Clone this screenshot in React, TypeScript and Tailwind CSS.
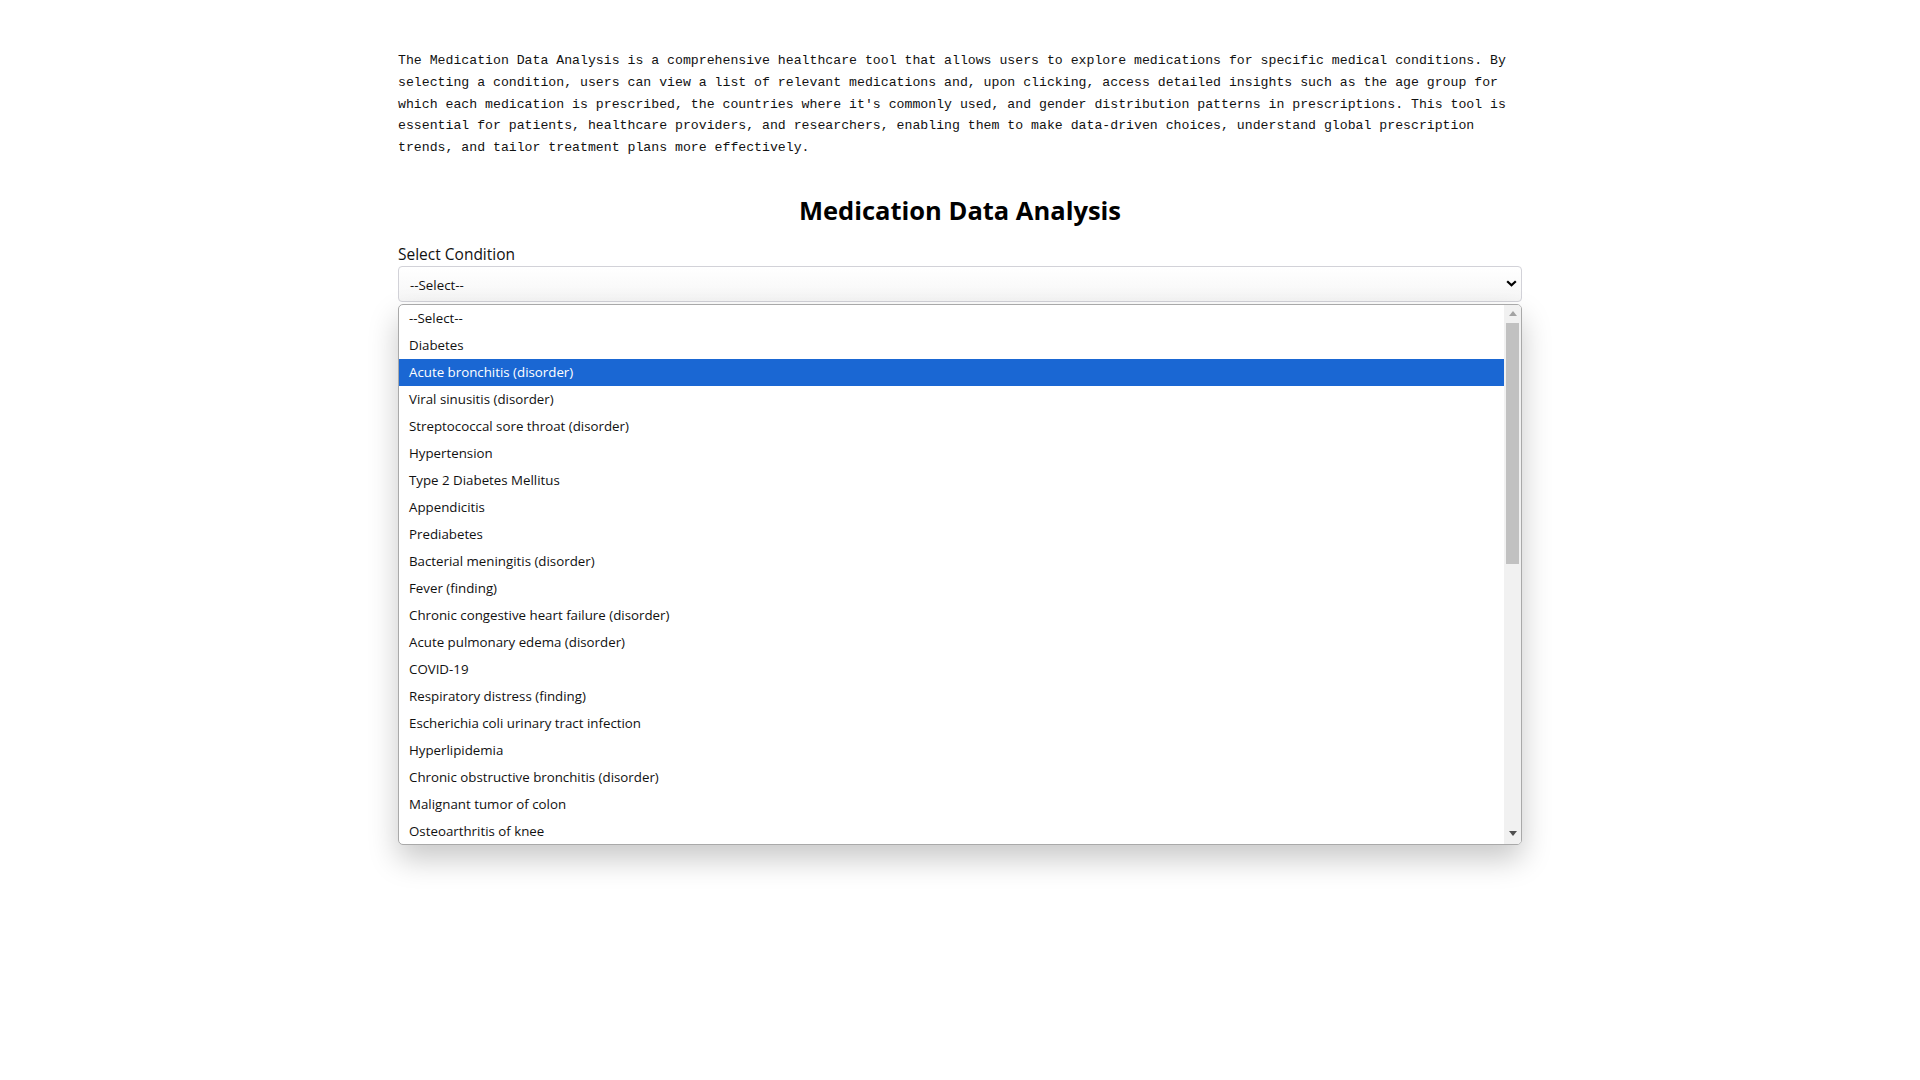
const conditions = [
  "--Select--",
  "Diabetes",
  "Acute bronchitis (disorder)",
  "Viral sinusitis (disorder)",
  "Streptococcal sore throat (disorder)",
  "Hypertension",
  "Type 2 Diabetes Mellitus",
  "Appendicitis",
  "Prediabetes",
  "Bacterial meningitis (disorder)",
  "Fever (finding)",
  "Chronic congestive heart failure (disorder)",
  "Acute pulmonary edema (disorder)",
  "COVID-19",
  "Respiratory distress (finding)",
  "Escherichia coli urinary tract infection",
  "Hyperlipidemia",
  "Chronic obstructive bronchitis (disorder)",
  "Malignant tumor of colon",
  "Osteoarthritis of knee",
];

const selected = "Acute bronchitis (disorder)";

const App = () => {
  return (
    <div className="min-h-screen w-full bg-white text-black">
      <div className="mx-auto w-[1124px] pt-[50px]">
        {/* intro */}
        <p className="font-['Liberation_Mono',monospace] text-[13.2px] leading-[21.8px] text-[#111]">
          The Medication Data Analysis is a comprehensive healthcare tool that allows users to explore medications for
          specific medical conditions. By selecting a condition, users can view a list of relevant medications and, upon
          clicking, access detailed insights such as the age group for which each medication is prescribed, the countries
          where it's commonly used, and gender distribution patterns in prescriptions. This tool is essential for patients,
          healthcare providers, and researchers, enabling them to make data-driven choices, understand global prescription
          trends, and tailor treatment plans more effectively.
        </p>

        <h2 className="mt-[35px] text-center font-['Open_Sans',sans-serif] text-[25.5px] font-bold leading-[32px]">
          Medication Data Analysis
        </h2>

        <div className="mt-[18px] font-['Open_Sans',sans-serif]">
          <label className="block text-[15.5px] leading-[20px] text-[#111]">Select Condition</label>

          <div className="relative mt-[2px]">
            <div className="flex h-[36px] items-center justify-between rounded-[4px] border border-[#d2d2d8] bg-gradient-to-b from-white to-[#f6f6f6] pl-[11px] pr-[3px] text-[13.3px] text-[#111]">
              <span className="pt-[3px]">--Select--</span>
              <svg width="11" height="7" viewBox="0 0 11 7" className="mr-[1px]">
                <polyline points="1.2,1.2 5.5,5.3 9.8,1.2" fill="none" stroke="#000" strokeWidth="2.2" />
              </svg>
            </div>

            {/* open native-style list */}
            <div className="absolute left-0 right-0 top-[38px] flex h-[541px] overflow-hidden rounded-[5px] border border-[#a9a9a9] bg-white shadow-[0_14px_30px_rgba(0,0,0,0.22)]">
              <ul className="flex-1">
                {conditions.map((c) => (
                  <li
                    key={c}
                    className={
                      c === selected
                        ? "flex h-[27px] items-center bg-[#1a67d3] pl-[10px] text-[13.3px] text-white"
                        : "flex h-[27px] items-center pl-[10px] text-[13.3px] text-[#111]"
                    }
                  >
                    {c}
                  </li>
                ))}
              </ul>
              <div className="flex w-[17px] flex-col bg-[#f1f1f1]">
                <div className="flex h-[17px] items-center justify-center">
                  <svg width="8" height="5" viewBox="0 0 8 5">
                    <polygon points="0,5 8,5 4,0" fill="#a3a3a3" />
                  </svg>
                </div>
                <div className="mx-[2px] mt-[1px] h-[241px] bg-[#c1c1c1]" />
                <div className="flex-1" />
                <div className="flex h-[20px] items-center justify-center">
                  <svg width="8" height="5" viewBox="0 0 8 5">
                    <polygon points="0,0 8,0 4,5" fill="#505050" />
                  </svg>
                </div>
              </div>
            </div>
          </div>
        </div>
      </div>
    </div>
  );
};

export default App;
